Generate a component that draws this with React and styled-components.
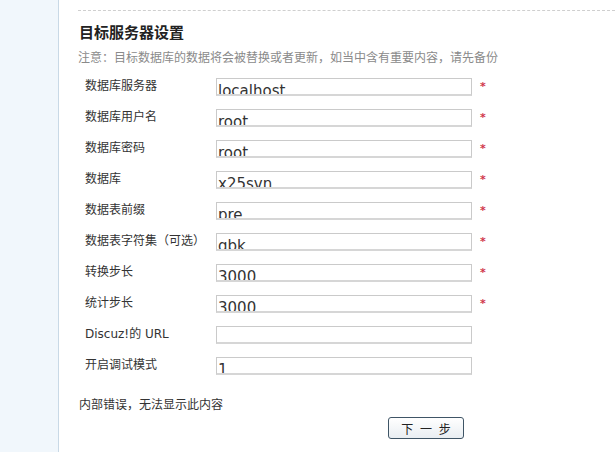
import React from "react";
import styled, { createGlobalStyle } from "styled-components";

const Global = createGlobalStyle`
  html, body { margin: 0; padding: 0; background: #fff; }
  body { font-family: "DejaVu Sans", "Noto Sans CJK SC", sans-serif; color: #333; }
  #root { height: 452px; overflow: hidden; }
`;

const Page = styled.div`
  display: flex;
  height: 452px;
`;

const Sidebar = styled.div`
  width: 58px;
  flex: none;
  background: #f1f7fc;
  border-right: 1px solid #c9d9e6;
`;

const Main = styled.div`
  flex: 1;
  padding: 10px 1px 0 19px;
  display: flex;
  flex-direction: column;
`;

const Divider = styled.div`
  border-top: 1px dashed #cfcfcf;
`;

const Title = styled.h2`
  margin: 11px 0 0 1px;
  font-family: "Noto Sans CJK SC", sans-serif;
  font-size: 15px;
  line-height: 20px;
  font-weight: bold;
  color: #222;
`;

const Note = styled.p`
  margin: 6px 0 0;
  font-family: "Noto Sans CJK SC", sans-serif;
  font-size: 12px;
  line-height: 18px;
  color: #8a8a8a;
`;

const Form = styled.div`
  margin-top: 12px;
  display: grid;
  grid-template-columns: 131px 256px auto;
  grid-auto-rows: 18px;
  row-gap: 13px;
  padding-left: 7px;
`;

const Label = styled.label`
  font-family: "DejaVu Sans", "Noto Sans CJK SC", sans-serif;
  font-size: 12px;
  line-height: 16px;
  color: #333;
  white-space: nowrap;
`;

const Field = styled.input`
  box-sizing: border-box;
  width: 256px;
  height: 18px;
  margin: 0;
  border: 1px solid #cacaca;
  border-bottom: 2px solid #d6d6d6;
  padding: 9px 1px 0;
  font-family: "DejaVu Sans", sans-serif;
  font-size: 15px;
  line-height: 16px;
  color: #333;
  background: #fff;
  outline: none;
`;

const Mark = styled.div`
  display: flex;
  align-items: flex-start;
  padding: 3px 0 0 8px;
`;

const Required = styled.span`
  font-size: 11px;
  line-height: 11px;
  color: #d0364c;
  font-weight: bold;
`;

const Error = styled.p`
  margin: 21px 0 0 1px;
  font-family: "Noto Sans CJK SC", sans-serif;
  font-size: 12px;
  line-height: 16px;
  color: #333;
`;

const Actions = styled.div`
  display: flex;
  padding-left: 310px;
  margin-top: 5px;
`;

const Button = styled.button`
  width: 76px;
  height: 22px;
  border: 1px solid #3f5566;
  border-radius: 3px;
  background: linear-gradient(#ffffff, #e9eef2);
  font-family: "Noto Sans CJK SC", sans-serif;
  font-size: 12px;
  color: #222;
  padding: 0;
  word-spacing: 4px;
`;

const rows = [
  ["数据库服务器", "localhost", true],
  ["数据库用户名", "root", true],
  ["数据库密码", "root", true],
  ["数据库", "x25svn", true],
  ["数据表前缀", "pre_", true],
  ["数据表字符集（可选）", "gbk", true],
  ["转换步长", "3000", true],
  ["统计步长", "3000", true],
  ["Discuz!的 URL", "", false],
  ["开启调试模式", "1", false],
];

export default function App() {
  return (
    <>
      <Global />
      <Page>
        <Sidebar />
        <Main>
          <Divider />
          <Title>目标服务器设置</Title>
          <Note>注意：目标数据库的数据将会被替换或者更新，如当中含有重要内容，请先备份</Note>
          <Form>
            {rows.map(([label, value, req], i) => (
              <React.Fragment key={i}>
                <Label>{label}</Label>
                <Field defaultValue={value} />
                <Mark>{req && <Required>*</Required>}</Mark>
              </React.Fragment>
            ))}
          </Form>
          <Error>内部错误，无法显示此内容</Error>
          <Actions>
            <Button>下 一 步</Button>
          </Actions>
        </Main>
      </Page>
    </>
  );
}
